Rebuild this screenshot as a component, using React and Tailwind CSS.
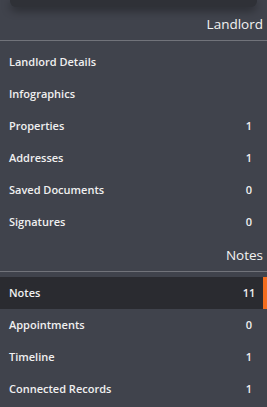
import React from 'react';

const landlordRows = [
  { label: 'Landlord Details', count: null },
  { label: 'Infographics', count: null },
  { label: 'Properties', count: 1 },
  { label: 'Addresses', count: 1 },
  { label: 'Saved Documents', count: 0 },
  { label: 'Signatures', count: 0 },
];

const notesRows = [
  { label: 'Notes', count: 11, active: true },
  { label: 'Appointments', count: 0 },
  { label: 'Timeline', count: 1 },
  { label: 'Connected Records', count: 1 },
];

const SectionHeader = ({ title }) => (
  <div className="h-[34px] flex items-center justify-end pr-1 pt-[1px] border-b border-[#71737a] text-[13.5px] text-[#f2f2f2] mb-[5px]">
    {title}
  </div>
);

const Row = ({ label, count, active }) => (
  <div className={`relative h-8 flex items-center pl-[9px] text-[11px] font-semibold text-[#f0f0f0] ${active ? 'bg-[#2a2b30]' : ''}`}>
    <span className="flex-1">{label}</span>
    <span className="w-6 mr-[6px] text-center">{count}</span>
    {active && <span className="absolute right-0 top-0 bottom-0 w-1 bg-[#f26c1e]" />}
  </div>
);

export default function App() {
  return (
    <div className="w-[267px] h-[407px] bg-[#40434c] overflow-hidden" style={{ fontFamily: '"Open Sans", "Noto Sans", sans-serif' }}>
      <div className="mx-[10px] h-[7px] rounded-b-md bg-[#2f3137] shadow-[0_3px_10px_rgba(0,0,0,0.45)]" />
      <SectionHeader title="Landlord" />
      {landlordRows.map((r) => (
        <Row key={r.label} {...r} />
      ))}
      <SectionHeader title="Notes" />
      {notesRows.map((r) => (
        <Row key={r.label} {...r} />
      ))}
    </div>
  );
}
